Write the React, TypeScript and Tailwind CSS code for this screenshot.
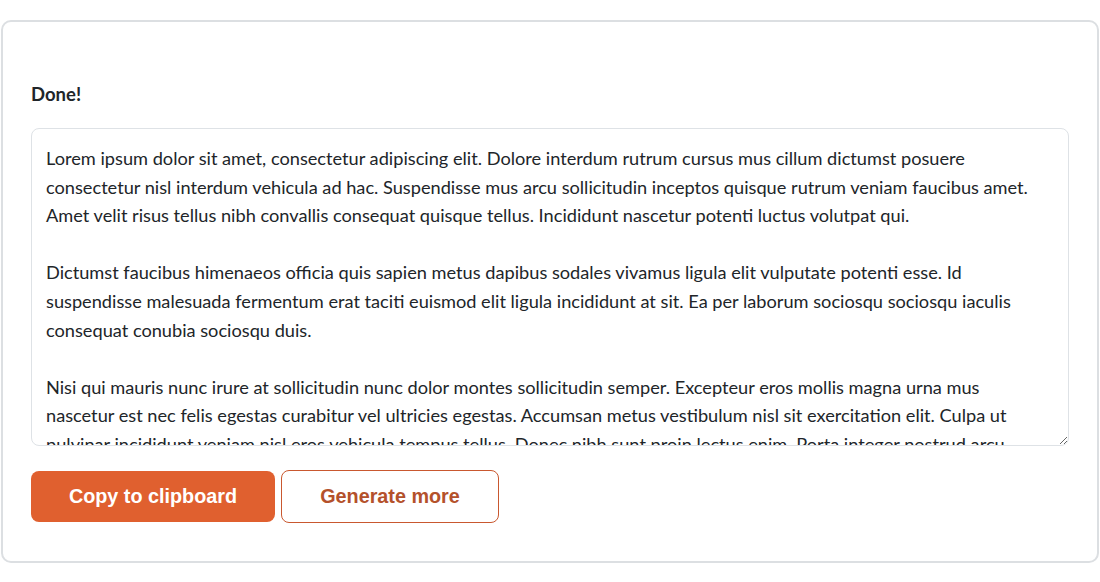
const text = `Lorem ipsum dolor sit amet, consectetur adipiscing elit. Dolore interdum rutrum cursus mus cillum dictumst posuere consectetur nisl interdum vehicula ad hac. Suspendisse mus arcu sollicitudin inceptos quisque rutrum veniam faucibus amet. Amet velit risus tellus nibh convallis consequat quisque tellus. Incididunt nascetur potenti luctus volutpat qui.

Dictumst faucibus himenaeos officia quis sapien metus dapibus sodales vivamus ligula elit vulputate potenti esse. Id suspendisse malesuada fermentum erat taciti euismod elit ligula incididunt at sit. Ea per laborum sociosqu sociosqu iaculis consequat conubia sociosqu duis.

Nisi qui mauris nunc irure at sollicitudin nunc dolor montes sollicitudin semper. Excepteur eros mollis magna urna mus nascetur est nec felis egestas curabitur vel ultricies egestas. Accumsan metus vestibulum nisl sit exercitation elit. Culpa ut pulvinar incididunt veniam nisl eros vehicula tempus tellus. Donec nibh sunt proin lectus enim. Porta integer nostrud arcu mollit.`;

export default function App() {
  return (
    <div className="min-h-screen bg-white px-[1px] pt-[20px] font-['Lato',sans-serif] text-[#212529]">
      <div className="rounded-[10px] border-2 border-[#dcdfe2] px-[28px] pt-[61px] pb-[38px]">
        <h2 className="mb-[23px] text-[18.5px] font-bold leading-[22px]">Done!</h2>

        {/* generated output */}
        <textarea
          readOnly
          value={text}
          className="block h-[318px] w-full resize-y overflow-hidden rounded-[8px] border border-[#dee2e6] py-[15px] pl-[14px] pr-[20px] text-[18.2px] leading-[28.6px] text-[#212529] outline-none"
        />

        <div className="mt-[24px] flex items-center gap-[6px] font-['Liberation_Sans',Arial,sans-serif]">
          <button className="h-[51px] w-[244px] rounded-[8px] bg-[#e0602f] text-[19.8px] font-bold text-white">
            Copy to clipboard
          </button>
          <button className="h-[53px] w-[218px] rounded-[8px] border border-[#c9582f] bg-white text-[19.8px] font-bold text-[#b4512b]">
            Generate more
          </button>
        </div>
      </div>
    </div>
  );
}
